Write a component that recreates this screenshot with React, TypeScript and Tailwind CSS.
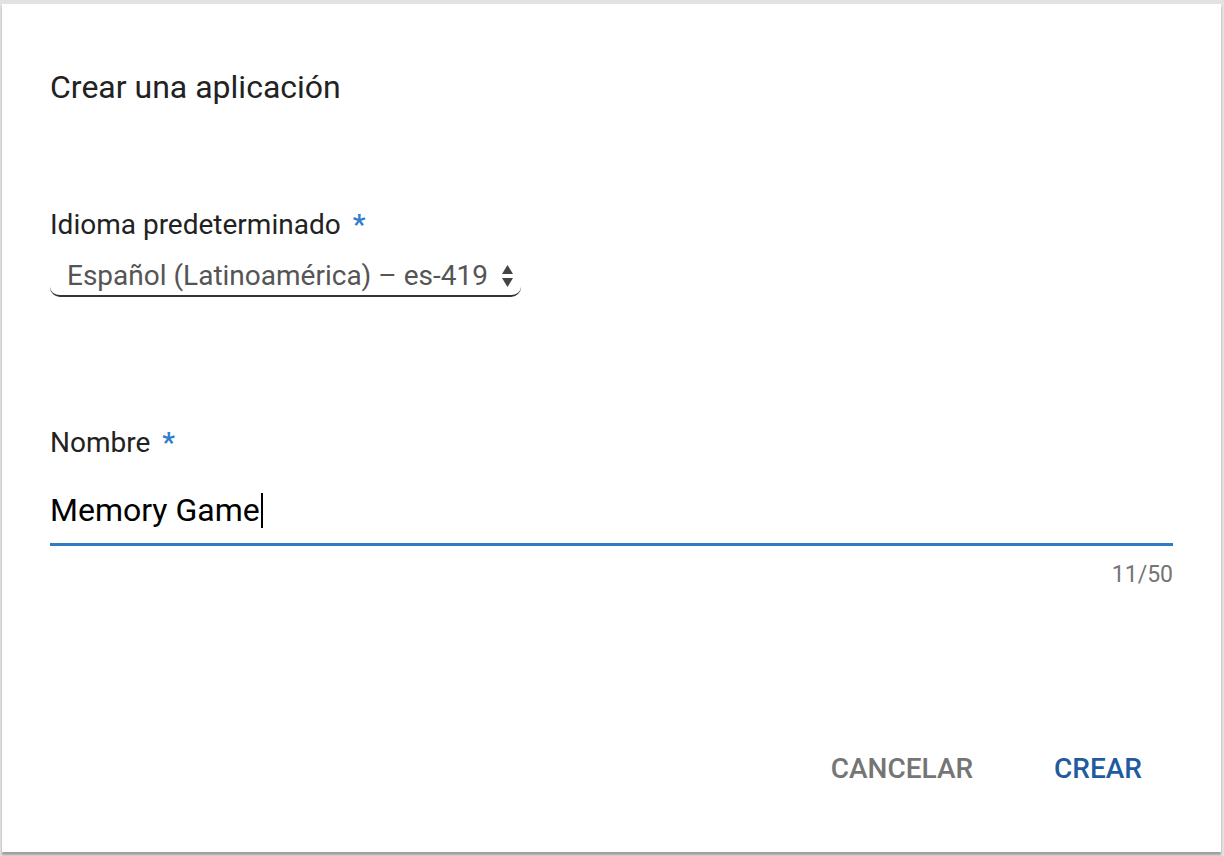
import React from "react"

function SortArrows() {
  return (
    <svg width="13" height="26" viewBox="0 0 13 26" className="shrink-0">
      <path d="M6.5 2 L12 11 H1 Z" fill="#444" />
      <path d="M6.5 24 L12 15 H1 Z" fill="#444" />
    </svg>
  )
}

function Req() {
  return <span className="ml-[12px] text-[#2f7fce] font-bold">*</span>
}

export default function App() {
  return (
    <div className="w-[1224px] h-[856px] bg-[#e2e2e2] pt-[4px] pl-[2px] pr-[3px] pb-[4px] overflow-hidden font-['Roboto',sans-serif]">
      <div className="h-full bg-white shadow-[0_3px_2px_rgba(0,0,0,0.3)] flex flex-col pt-[65px] px-[48px] pb-[65px]">
        <h1 className="text-[32px] leading-[36px] text-[#222] font-normal">Crear una aplicación</h1>

        <div className="mt-[104px] text-[28px] leading-[32px] text-[#222]">
          Idioma predeterminado<Req />
        </div>
        <div className="mt-[16px] w-[471px] h-[40px] flex items-center justify-between pl-[17px] pr-[7px] border-b-2 border-[#333] rounded-b-[10px]">
          <span className="text-[28px] text-[#555] leading-[32px]">Español (Latinoamérica) – es-419</span>
          <SortArrows />
        </div>

        <div className="mt-[130px] text-[28px] leading-[32px] text-[#222]">
          Nombre<Req />
        </div>
        <div className="mt-[31px] h-[40px] flex items-center">
          <span className="text-[32px] leading-[40px] text-black">Memory Game</span>
          <span className="ml-[1px] w-[2px] h-[35px] bg-black" />
        </div>
        <div className="mt-[13px] h-[3px] bg-[#2f7bc6]" />
        <div className="mt-[17px] text-right text-[23px] leading-[24px] text-[#757575]">11/50</div>

        <div className="mt-auto flex justify-end gap-[49px] pr-[15px]">
          <button className="px-4 text-[28px] leading-[36px] font-medium text-[#757575]">CANCELAR</button>
          <button className="px-4 text-[28px] leading-[36px] font-medium text-[#1f5b9e]">CREAR</button>
        </div>
      </div>
    </div>
  )
}
